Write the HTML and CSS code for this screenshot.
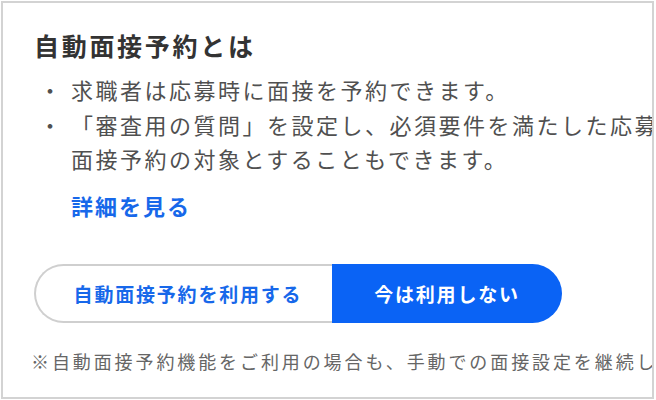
FILE: index.html
```html
<!DOCTYPE html>
<html lang="ja">
<head>
<meta charset="utf-8">
<link rel="stylesheet" href="styles.css">
</head>
<body>
<div class="frame">
  <div class="card">
    <h2 class="title">自動面接予約とは</h2>
    <ul class="points">
      <li class="point"><span class="dot">・</span><span class="point-text">求職者は応募時に面接を予約できます。</span></li>
      <li class="point"><span class="dot">・</span><span class="point-text">「審査用の質問」を設定し、必須要件を満たした応募者のみを面接予約の対象とすることもできます。</span></li>
    </ul>
    <a class="more" href="#">詳細を見る</a>
    <div class="toggle">
      <button class="opt opt-on" type="button">自動面接予約を利用する</button>
      <button class="opt opt-off" type="button">今は利用しない</button>
    </div>
    <p class="note">※自動面接予約機能をご利用の場合も、手動での面接設定を継続して行うことができます。</p>
  </div>
</div>
</body>
</html>
```

FILE: styles.css
```css
* { box-sizing: border-box; }
html, body { margin: 0; padding: 0; background: #ffffff; }
body {
  font-family: "Noto Sans CJK JP", "Noto Sans", sans-serif;
  padding: 1px 0 0 1px;
}
.frame {
  width: 653px;
  height: 398px;
  border: 2px solid #d3d3d3;
  overflow: hidden;
  background: #fff;
}
.card {
  width: 800px;
  padding: 24px 0 0 31px;
}
.title {
  margin: 0 0 9px 0;
  font-size: 25px;
  line-height: 36px;
  font-weight: 700;
  color: #333333;
  letter-spacing: 2.7px;
}
.points {
  list-style: none;
  margin: 0;
  padding: 0;
}
.point {
  display: flex;
  font-size: 22px;
  line-height: 34.5px;
  color: #505050;
  letter-spacing: 2.5px;
}
.dot {
  flex: 0 0 37px;
  padding-left: 5px;
}
.point-text {
  max-width: 690px;
}
.more {
  display: inline-block;
  margin: 12px 0 0 37px;
  font-size: 22px;
  line-height: 34.5px;
  font-weight: 700;
  color: #1768ea;
  letter-spacing: 2px;
  text-decoration: none;
}
.toggle {
  display: flex;
  margin-top: 42px;
  height: 59px;
}
.opt {
  font-family: inherit;
  font-size: 19px;
  font-weight: 700;
  letter-spacing: 1.8px;
  height: 59px;
  padding: 0;
  margin: 0;
  cursor: pointer;
}
.opt-on {
  width: 298px;
  padding-left: 8px;
  background: #ffffff;
  color: #1768ea;
  border: 2px solid #cfcfcf;
  border-right: none;
  border-radius: 30px 0 0 30px;
}
.opt-off {
  width: 230px;
  background: #0a63f5;
  color: #ffffff;
  border: none;
  border-radius: 0 30px 30px 0;
}
.note {
  margin: 25px 0 0 -3px;
  font-size: 18px;
  line-height: 27px;
  color: #666666;
  letter-spacing: 2.9px;
  white-space: nowrap;
}
```
